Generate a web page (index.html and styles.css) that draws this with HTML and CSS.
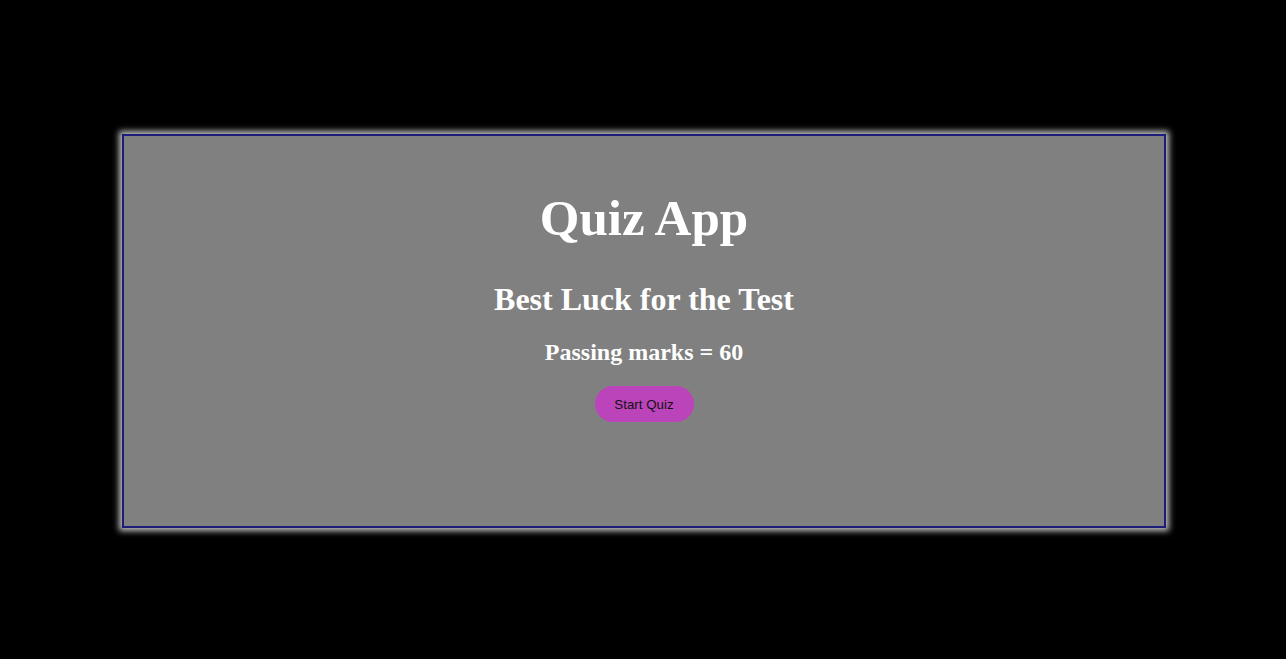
FILE: index.html
```html
<!DOCTYPE html>
<html>
<head>
<meta charset="utf-8">
<link rel="stylesheet" href="styles.css">
</head>
<body>
<main class="page">
  <section class="card">
    <h1 class="title">Quiz App</h1>
    <h2 class="subtitle">Best Luck for the Test</h2>
    <h3 class="marks">Passing marks = 60</h3>
    <button class="start">Start Quiz</button>
  </section>
</main>
</body>
</html>
```
FILE: styles.css
```css
html, body {
  margin: 0;
  padding: 0;
  background: #000;
}
.page {
  height: 659px;
  display: flex;
  justify-content: center;
  padding-top: 134px;
  padding-left: 2px;
  box-sizing: border-box;
}
.card {
  width: 1044px;
  height: 394px;
  box-sizing: border-box;
  border: 2px solid #1c1c7a;
  background: #808080;
  box-shadow: 0 0 6px 3px rgba(255,255,255,0.75);
  display: flex;
  flex-direction: column;
  align-items: center;
  padding-top: 54px;
  font-family: "Liberation Serif", "Times New Roman", serif;
  color: #fff;
}
.title {
  margin: 0;
  font-size: 51px;
  line-height: 56px;
  font-weight: bold;
}
.subtitle {
  margin: 35px 0 0;
  font-size: 32px;
  line-height: 37px;
  font-weight: bold;
}
.marks {
  margin: 20px 0 0;
  font-size: 24px;
  line-height: 28px;
  font-weight: bold;
}
.start {
  margin-top: 20px;
  width: 99px;
  height: 36px;
  border: none;
  border-radius: 18px;
  background: #bb44bb;
  color: #111;
  font-family: "Liberation Sans", Arial, sans-serif;
  font-size: 13.333px;
  padding: 0;
}
```
